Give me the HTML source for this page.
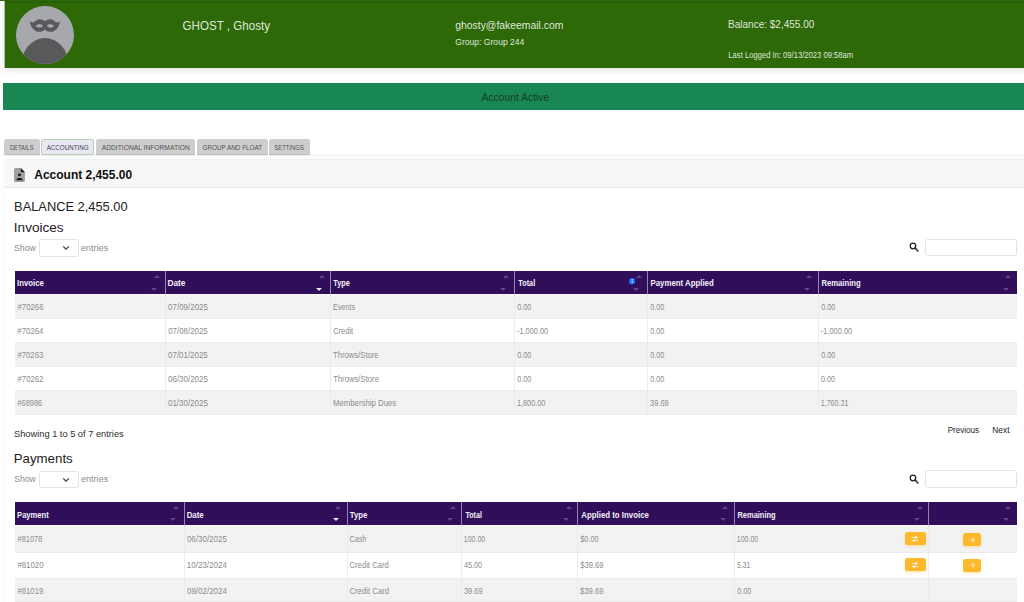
<!DOCTYPE html>
<html lang="en">
<head>
<meta charset="utf-8">
<title>Account - GHOST, Ghosty</title>
<style>
*{box-sizing:border-box}
html,body{margin:0;padding:0}
body{width:1024px;height:602px;overflow:hidden;background:#fff;position:relative;
  font-family:"Liberation Sans",sans-serif;color:#212529}
.abs{position:absolute;white-space:nowrap;line-height:1}
.s{display:inline-block;transform-origin:0 50%;white-space:nowrap}

/* ---------- profile header ---------- */
.profile{position:absolute;left:4.6px;top:0;width:1030px;height:67.6px;background:#2d6a07;
  box-shadow:-1px 0 0 rgba(45,106,7,.35),0 2px 7px rgba(0,0,0,.13)}
.profile:before{content:"";position:absolute;left:0;top:1px;right:0;height:2.5px;
  background:linear-gradient(#265b09,#2d6a07)}
.topstrip{position:absolute;left:0;top:0;width:1024px;height:1px;background:#2e6b08}
.avatar{position:absolute;left:11.4px;top:5.5px;width:58px;height:58px}
.profile .t{color:rgba(255,255,255,.86);font-weight:400}
.name{left:177.6px;top:20.3px;font-size:12.9px}
.email{left:450.2px;top:18.5px;font-size:11.6px}
.group{left:450.2px;top:38px;font-size:8.6px}
.bal{left:723.4px;top:18.6px;font-size:11.1px}
.last{left:723.4px;top:51.2px;font-size:8.5px}

/* ---------- status ---------- */
.status{position:absolute;left:3.1px;top:83.1px;width:1030px;height:26.9px;background:#198754}
.status span{left:478.4px;top:9.7px;font-size:10.2px;color:#173d2d}

/* ---------- tabs ---------- */
.tabs{position:absolute;left:0;top:139.1px;height:17px;width:1024px;margin:0;padding:0;list-style:none;
  border-bottom:1px solid #f1f1f1}
.tabs li{position:absolute;top:0;height:16.4px;background:#cecece;border-radius:2.5px 2.5px 1.5px 1.5px;
  font-size:6.7px;line-height:18.2px;color:#4f4f4f;white-space:nowrap;
  box-shadow:inset 0 -1px 0 #bcbcbc}
.tabs li .s{position:absolute;top:0;left:4.7px}
.tabs li.on{background:#ebe8f6;color:#3f3f46;box-shadow:inset 0 0 0 1px #b7d0b3}

/* ---------- card ---------- */
.card{position:absolute;left:4.6px;top:159.3px;width:1030px;height:460px;background:#fff;
  border-radius:3px;box-shadow:0 0 7px rgba(82,63,105,.055)}
.card-in{position:absolute;left:-4.6px;top:-159.3px;width:1024px;height:602px}
.card-h{position:absolute;left:4.6px;top:159.3px;width:1030px;height:28.3px;background:#f7f7f7;border-bottom:1px solid #e7e7e7;border-top:1px solid #f0f0f0;border-radius:3px 3px 0 0}
.ttl{left:34px;top:168.5px;font-size:12px;font-weight:700;color:#0f0f0f}
.h4{font-size:13.2px;color:#222}
.lbl{font-size:9.2px;color:#8c8c8c}
.sel{position:absolute;left:39px;width:39.7px;height:17.4px;border:1px solid #e1e4e8;border-radius:2.5px;background:#fff}
.sel .chev{position:absolute;left:22.4px;top:5.3px}
.inp{position:absolute;left:925px;width:92px;height:17.4px;border:1px solid #e1e4e8;border-radius:2.5px;background:#fff}
.mag{position:absolute;left:909px}
.info{font-size:8.8px;color:#2c2c2c}
.pg{font-size:8.5px;color:#222}

/* ---------- tables ---------- */
table{position:absolute;border-collapse:separate;border-spacing:0;table-layout:fixed}
th{background:#300e5a;color:#f4f1f8;font-size:8.3px;font-weight:700;text-align:left;vertical-align:top;padding:7.65px 0 0 2.6px;height:24.3px;border-bottom:1px solid #fbfbfb;
  border-left:1px solid #9383ab;position:relative;line-height:10px;white-space:nowrap}
th:first-child{border-left:0;padding-left:2.6px}
td{font-size:8.6px;color:#8c8c8c;vertical-align:top;padding:6.9px 0 0 2.6px;height:24px;border-left:1px solid #ebebef;border-bottom:1px solid #eaeaed;
  line-height:10px;white-space:nowrap}
td:first-child{border-left:0}
tbody tr:nth-child(odd) td{background:#f2f2f2}
th i{position:absolute;width:0;height:0;border-left:3.1px solid transparent;border-right:3.1px solid transparent}
th i.u{right:5.6px;top:4px;border-bottom:3.4px solid #5e4783}
th i.d{right:7.8px;top:16.5px;border-top:3.4px solid #5e4783}
th i.d.a{border-top-color:#e9e4f0}
.inf{position:absolute;right:12.3px;top:7.3px}
.btn{display:inline-block;background:#fdb92c;border-radius:2.6px;position:absolute;
  box-shadow:0 1.5px 3px rgba(253,185,44,.32)}
.btn svg{position:absolute;left:50%;top:50%;transform:translate(-50%,-50%)}
td.bt{position:relative;padding:0}
td.bt.tx{padding:6.9px 0 0 2.6px}
.b1{width:20.9px;height:13.2px;right:2.2px;top:5.5px}
.b2{width:18px;height:13.2px;left:34.1px;top:6.2px}
#pay tr.h0 td{height:26.4px}
#pay tr.h1 td{height:25.7px}
#pay tr.h2 td{height:23.3px}
#pay tr.h1 .b1{top:5.2px}
#pay tr.h1 .b2{top:5.7px}
.b1 svg{margin-left:-.7px;margin-top:.3px}
.b2 svg{margin-left:.6px;margin-top:.3px}
#pay tr.h0 td{padding-top:7.8px}
#pay tr.h1 td{padding-top:6.9px}
#pay tr.h2 td{padding-top:7.3px}
#inv th{padding-top:7.1px}
#pay th{height:24.6px}
</style>
</head>
<body>

<div class="topstrip"></div>
<div class="profile">
  <svg class="avatar" viewBox="0 0 58 58">
    <defs><clipPath id="c"><circle cx="29" cy="29" r="29"/></clipPath></defs>
    <circle cx="29" cy="29" r="29" fill="#a7a8ab"/>
    <ellipse cx="29" cy="60" rx="24" ry="28" fill="#58595b" clip-path="url(#c)"/>
    <path fill="#58595b" transform="translate(0 -.65)" d="M14 15.500C15.200 17.200 16.800 17.400 18.200 16.600C19.800 15.200 21.500 13.900 23.600 13.900C25.800 13.900 27.600 14.800 28.900 15.900C30.200 14.800 32 13.900 34.200 13.900C36.300 13.900 38 15.200 39.600 16.600C41 17.400 42.600 17.200 43.800 15.500C43.800 18 43 20.600 41.600 22.600C39.900 25 37.400 26.500 34.600 26.500C32.200 26.500 30.500 25.400 29.600 24.600C29.300 24.400 29.100 24.300 28.900 24.300C28.700 24.300 28.500 24.400 28.200 24.600C27.300 25.400 25.600 26.500 23.200 26.500C20.400 26.500 17.900 25 16.200 22.600C14.800 20.600 14 18 14 15.500Z"/>
    <path fill="#a7a8ab" transform="translate(0 -.65)" d="M19.900 20.600C21 19 23 18.600 24.600 18.900C25.800 19.200 26.600 20 26.800 20.900C25.800 21.900 24 22.300 22.400 22.100C21.200 21.900 20.300 21.400 19.900 20.600ZM37.900 20.600C36.800 19 34.800 18.600 33.200 18.900C32 19.200 31.200 20 31 20.900C32 21.900 33.800 22.300 35.400 22.100C36.600 21.900 37.500 21.400 37.900 20.600Z"/>
  </svg>
  <div class="abs t name"><span id="name" class="s" style="transform:translateX(0.59px) scaleX(0.8992)">GHOST , Ghosty</span></div>
  <div class="abs t email"><span id="email" class="s" style="transform:translateX(0.24px) scaleX(0.8967)">ghosty@fakeemail.com</span></div>
  <div class="abs t group"><span id="group" class="s" style="transform:translateX(0.24px) scaleX(0.9981)">Group: Group 244</span></div>
  <div class="abs t bal"><span id="bal" class="s" style="transform:translateX(0.11px) scaleX(0.9010)">Balance: $2,455.00</span></div>
  <div class="abs t last"><span id="last" class="s" style="transform:translateX(0.36px) scaleX(0.8983)">Last Logged In: 09/13/2023 09:58am</span></div>
</div>

<div class="status"><span class="abs"><span id="active" class="s" style="transform:translateX(0.58px) scaleX(1.0121)">Account Active</span></span></div>

<ul class="tabs">
  <li style="left:4.3px;width:35.5px"><span id="t1" class="s" style="transform:translateX(0.91px) scaleX(0.8700)">DETAILS</span></li>
  <li class="on" style="left:41.2px;width:53.3px"><span id="t2" class="s" style="transform:translateX(0.64px) scaleX(0.9319)">ACCOUNTING</span></li>
  <li style="left:96.1px;width:99px"><span id="t3" class="s" style="transform:translateX(0.74px) scaleX(1.0009)">ADDITIONAL INFORMATION</span></li>
  <li style="left:197px;width:70.7px"><span id="t4" class="s" style="transform:translateX(0.47px) scaleX(0.9480)">GROUP AND FLOAT</span></li>
  <li style="left:269.3px;width:40.5px"><span id="t5" class="s" style="transform:translateX(0.24px) scaleX(0.8851)">SETTINGS</span></li>
</ul>

<div class="card"><div class="card-in">
  <div class="card-h"></div>
  <svg style="position:absolute;left:14.1px;top:167.8px" width="10.900" height="14.100" viewBox="0 0 10.900 14.100">
    <path d="M1.600 0h5.200l4.100 4.200v8.300a1.600 1.600 0 0 1-1.600 1.600H1.600A1.600 1.600 0 0 1 0 12.500V1.600A1.600 1.600 0 0 1 1.600 0z" fill="#a0a0a3"/>
    <path d="M6.800 0l4.100 4.200H7.600a.8.800 0 0 1-.8-.8z" fill="#1b1b1d"/>
    <circle cx="5.500" cy="6.900" r="1.450" fill="#1b1b1d"/>
    <path d="M2.400 12.300c0-1.400 1-2.200 2.300-2.200h1.600c1.300 0 2.300.8 2.300 2.200z" fill="#1b1b1d"/>
  </svg>
  <div class="abs ttl"><span id="acct" class="s" style="transform:translateX(0.33px) scaleX(0.9967)">Account 2,455.00</span></div>

  <div class="abs h4" style="left:14px;top:199.6px"><span id="balance" class="s" style="transform:translateX(0.06px) scaleX(0.9742)">BALANCE 2,455.00</span></div>
  <div class="abs h4" style="left:14px;top:220.8px"><span id="invoices" class="s" style="transform:translateX(-0.14px) scaleX(1.0272)">Invoices</span></div>
  <div class="abs lbl" style="left:14px;top:244px"><span id="show1" class="s" style="transform:translateX(-0.04px) scaleX(0.9581)">Show</span></div>
  <div class="sel" style="top:239.2px"><svg class="chev" width="8" height="6" viewBox="0 0 8 6"><path d="M1.200 1.300l2.800 2.800 2.800-2.800" fill="none" stroke="#333" stroke-width="1.100"/></svg></div>
  <div class="abs lbl" style="left:80.6px;top:244px"><span id="ent1" class="s" style="transform:translateX(-0.24px) scaleX(0.9994)">entries</span></div>
  <svg class="mag" style="top:242.4px" width="10.200" height="10.200" viewBox="0 0 11 11"><circle cx="4.300" cy="4.300" r="3" fill="none" stroke="#222" stroke-width="1.350"/><path d="M6.600 6.600l3 3" stroke="#222" stroke-width="1.550" stroke-linecap="round"/></svg>
  <div class="inp" style="top:239px"></div>

  <table id="inv" style="left:14.80px;top:271px;width:1002.10px">
<colgroup><col style="width:150.40px"><col style="width:165.00px"><col style="width:184.00px"><col style="width:133.00px"><col style="width:170.90px"><col style="width:198.80px"></colgroup>
<thead><tr>
<th><span id="invh0" class="s" style="transform:translateX(0.12px) scaleX(0.9356)">Invoice</span><i class="u"></i><i class="d"></i></th>
<th><span id="invh1" class="s" style="transform:translateX(-1.58px) scaleX(1.0035)">Date</span><i class="u"></i><i class="d a"></i></th>
<th><span id="invh2" class="s" style="transform:translateX(-0.78px) scaleX(0.8803)">Type</span><i class="u"></i><i class="d"></i></th>
<th><span id="invh3" class="s" style="transform:translateX(0.33px) scaleX(0.8780)">Total</span><svg class="inf" width="6.400" height="6.400" viewBox="0 0 8 8"><circle cx="4" cy="4" r="4" fill="#1a6dff"/><rect x="3.450" y="3.400" width="1.100" height="2.900" fill="#fff"/><circle cx="4" cy="2.200" r=".7" fill="#fff"/></svg><i class="u"></i><i class="d"></i></th>
<th><span id="invh4" class="s" style="transform:translateX(-0.52px) scaleX(0.9442)">Payment Applied</span><i class="u"></i><i class="d"></i></th>
<th><span id="invh5" class="s" style="transform:translateX(-0.61px) scaleX(0.9264)">Remaining</span><i class="u"></i><i class="d"></i></th>
</tr></thead><tbody>
<tr>
<td><span id="invr0c0" class="s" style="transform:translateX(0.48px) scaleX(0.9075)">#70266</span></td>
<td><span id="invr0c1" class="s" style="transform:translateX(-0.89px) scaleX(0.9254)">07/09/2025</span></td>
<td><span id="invr0c2" class="s" style="transform:translateX(-0.90px) scaleX(0.8340)">Events</span></td>
<td><span id="invr0c3" class="s" style="transform:translateX(-0.82px) scaleX(0.8491)">0.00</span></td>
<td><span id="invr0c4" class="s" style="transform:translateX(-0.81px) scaleX(0.8474)">0.00</span></td>
<td><span id="invr0c5" class="s" style="transform:translateX(-0.81px) scaleX(0.8390)">0.00</span></td>
</tr>
<tr>
<td><span id="invr1c0" class="s" style="transform:translateX(0.37px) scaleX(0.9098)">#70264</span></td>
<td><span id="invr1c1" class="s" style="transform:translateX(-0.83px) scaleX(0.9196)">07/08/2025</span></td>
<td><span id="invr1c2" class="s" style="transform:translateX(-0.83px) scaleX(0.8739)">Credit</span></td>
<td><span id="invr1c3" class="s" style="transform:translateX(-1.03px) scaleX(0.8599)">-1,000.00</span></td>
<td><span id="invr1c4" class="s" style="transform:translateX(-0.80px) scaleX(0.8494)">0.00</span></td>
<td><span id="invr1c5" class="s" style="transform:translateX(-1.13px) scaleX(0.8601)">-1,000.00</span></td>
</tr>
<tr>
<td><span id="invr2c0" class="s" style="transform:translateX(0.55px) scaleX(0.8935)">#70263</span></td>
<td><span id="invr2c1" class="s" style="transform:translateX(-0.93px) scaleX(0.9227)">07/01/2025</span></td>
<td><span id="invr2c2" class="s" style="transform:translateX(-0.90px) scaleX(0.8906)">Throws/Store</span></td>
<td><span id="invr2c3" class="s" style="transform:translateX(-0.82px) scaleX(0.8491)">0.00</span></td>
<td><span id="invr2c4" class="s" style="transform:translateX(-0.81px) scaleX(0.8474)">0.00</span></td>
<td><span id="invr2c5" class="s" style="transform:translateX(-0.81px) scaleX(0.8390)">0.00</span></td>
</tr>
<tr>
<td><span id="invr3c0" class="s" style="transform:translateX(0.59px) scaleX(0.8941)">#70262</span></td>
<td><span id="invr3c1" class="s" style="transform:translateX(-0.95px) scaleX(0.9258)">06/30/2025</span></td>
<td><span id="invr3c2" class="s" style="transform:translateX(-0.87px) scaleX(0.8960)">Throws/Store</span></td>
<td><span id="invr3c3" class="s" style="transform:translateX(-0.80px) scaleX(0.8498)">0.00</span></td>
<td><span id="invr3c4" class="s" style="transform:translateX(-0.80px) scaleX(0.8494)">0.00</span></td>
<td><span id="invr3c5" class="s" style="transform:translateX(-0.93px) scaleX(0.8406)">0.00</span></td>
</tr>
<tr>
<td><span id="invr4c0" class="s" style="transform:translateX(0.35px) scaleX(0.8666)">#68986</span></td>
<td><span id="invr4c1" class="s" style="transform:translateX(-1.05px) scaleX(0.9275)">01/30/2025</span></td>
<td><span id="invr4c2" class="s" style="transform:translateX(-1.12px) scaleX(0.9089)">Membership Dues</span></td>
<td><span id="invr4c3" class="s" style="transform:translateX(-1.12px) scaleX(0.8521)">1,800.00</span></td>
<td><span id="invr4c4" class="s" style="transform:translateX(-0.91px) scaleX(0.8676)">39.69</span></td>
<td><span id="invr4c5" class="s" style="transform:translateX(-1.27px) scaleX(0.8273)">1,760.31</span></td>
</tr>
</tbody></table>

  <div class="abs info" style="left:14px;top:429.7px"><span id="showing" class="s" style="transform:translateX(0.05px) scaleX(1.0524)">Showing 1 to 5 of 7 entries</span></div>
  <div class="abs pg" style="left:947.4px;top:425.6px"><span id="prev" class="s" style="transform:translateX(0.66px) scaleX(0.9525)">Previous</span></div>
  <div class="abs pg" style="left:991.8px;top:425.6px"><span id="next" class="s" style="transform:translateX(0.27px) scaleX(0.9835)">Next</span></div>

  <div class="abs h4" style="left:14px;top:452px"><span id="payments" class="s" style="transform:translateX(-0.32px) scaleX(1.0066)">Payments</span></div>
  <div class="abs lbl" style="left:14px;top:475.2px"><span id="show2" class="s" style="transform:translateX(0.18px) scaleX(0.9416)">Show</span></div>
  <div class="sel" style="top:470.6px"><svg class="chev" width="8" height="6" viewBox="0 0 8 6"><path d="M1.200 1.300l2.800 2.800 2.800-2.800" fill="none" stroke="#333" stroke-width="1.100"/></svg></div>
  <div class="abs lbl" style="left:80.6px;top:475.2px"><span id="ent2" class="s" style="transform:translateX(0.04px) scaleX(0.9840)">entries</span></div>
  <svg class="mag" style="top:473.7px" width="10.200" height="10.200" viewBox="0 0 11 11"><circle cx="4.300" cy="4.300" r="3" fill="none" stroke="#222" stroke-width="1.350"/><path d="M6.600 6.600l3 3" stroke="#222" stroke-width="1.550" stroke-linecap="round"/></svg>
  <div class="inp" style="top:470.4px"></div>

  <table id="pay" style="left:14.80px;top:501.9px;width:1002.10px">
<colgroup><col style="width:169.30px"><col style="width:162.50px"><col style="width:114.50px"><col style="width:116.10px"><col style="width:156.90px"><col style="width:194.10px"><col style="width:88.70px"></colgroup>
<thead><tr>
<th><span id="payh0" class="s" style="transform:translateX(0.11px) scaleX(0.9122)">Payment</span><i class="u"></i><i class="d"></i></th>
<th><span id="payh1" class="s" style="transform:translateX(-1.36px) scaleX(0.9505)">Date</span><i class="u"></i><i class="d a"></i></th>
<th><span id="payh2" class="s" style="transform:translateX(-0.27px) scaleX(0.9387)">Type</span><i class="u"></i><i class="d"></i></th>
<th><span id="payh3" class="s" style="transform:translateX(0.38px) scaleX(0.8599)">Total</span><i class="u"></i><i class="d"></i></th>
<th><span id="payh4" class="s" style="transform:translateX(0.31px) scaleX(0.9453)">Applied to Invoice</span><i class="u"></i><i class="d"></i></th>
<th><span id="payh5" class="s" style="transform:translateX(-0.57px) scaleX(0.9013)">Remaining</span><i class="u"></i><i class="d"></i></th>
<th><i class="u"></i><i class="d"></i></th>
</tr></thead><tbody>
<tr class="h0">
<td><span id="payr0c0" class="s" style="transform:translateX(0.55px) scaleX(0.8630)">#81078</span></td>
<td><span id="payr0c1" class="s" style="transform:translateX(-1.10px) scaleX(0.9299)">06/30/2025</span></td>
<td><span id="payr0c2" class="s" style="transform:translateX(-0.56px) scaleX(0.8395)">Cash</span></td>
<td><span id="payr0c3" class="s" style="transform:translateX(-1.13px) scaleX(0.8089)">100.00</span></td>
<td><span id="payr0c4" class="s" style="transform:translateX(-0.79px) scaleX(0.8558)">$0.00</span></td>
<td class="bt tx"><span id="payr0c5" class="s" style="transform:translateX(-1.14px) scaleX(0.8097)">100.00</span><a class="btn b1"><svg width="6.400" height="6.600" viewBox="0 0 6.400 6.600"><path d="M0 1.300h4v.8H0zM3.700 0l2.700 1.700-2.700 1.700zM6.400 4.500h-4v.8h4zM2.700 3.200L0 4.900l2.700 1.700z" fill="#fff"/></svg></a></td>
<td class="bt"><a class="btn b2"><svg width="5.600" height="5.600" viewBox="0 0 5.600 5.600"><path d="M2.800 0v5.600M0 2.800h5.600" stroke="#fff1cf" stroke-width=".85" fill="none"/></svg></a></td>
</tr>
<tr class="h1">
<td><span id="payr1c0" class="s" style="transform:translateX(0.38px) scaleX(0.9139)">#81020</span></td>
<td><span id="payr1c1" class="s" style="transform:translateX(-1.28px) scaleX(0.9339)">10/23/2024</span></td>
<td><span id="payr1c2" class="s" style="transform:translateX(-0.52px) scaleX(0.8956)">Credit Card</span></td>
<td><span id="payr1c3" class="s" style="transform:translateX(-1.02px) scaleX(0.8456)">45.00</span></td>
<td><span id="payr1c4" class="s" style="transform:translateX(-0.87px) scaleX(0.8902)">$39.69</span></td>
<td class="bt tx"><span id="payr1c5" class="s" style="transform:translateX(-1.01px) scaleX(0.7874)">5.31</span><a class="btn b1"><svg width="6.400" height="6.600" viewBox="0 0 6.400 6.600"><path d="M0 1.300h4v.8H0zM3.700 0l2.700 1.700-2.700 1.700zM6.400 4.500h-4v.8h4zM2.700 3.200L0 4.900l2.700 1.700z" fill="#fff"/></svg></a></td>
<td class="bt"><a class="btn b2"><svg width="5.600" height="5.600" viewBox="0 0 5.600 5.600"><path d="M2.800 0v5.600M0 2.800h5.600" stroke="#fff1cf" stroke-width=".85" fill="none"/></svg></a></td>
</tr>
<tr class="h2">
<td><span id="payr2c0" class="s" style="transform:translateX(0.51px) scaleX(0.8971)">#81019</span></td>
<td><span id="payr2c1" class="s" style="transform:translateX(-0.98px) scaleX(0.9257)">09/02/2024</span></td>
<td><span id="payr2c2" class="s" style="transform:translateX(-0.59px) scaleX(0.9041)">Credit Card</span></td>
<td><span id="payr2c3" class="s" style="transform:translateX(-1.03px) scaleX(0.8690)">39.69</span></td>
<td><span id="payr2c4" class="s" style="transform:translateX(-0.95px) scaleX(0.8951)">$39.69</span></td>
<td><span id="payr2c5" class="s" style="transform:translateX(-0.81px) scaleX(0.8390)">0.00</span></td>
<td></td>
</tr>
</tbody></table>
</div></div>
</body>
</html>
